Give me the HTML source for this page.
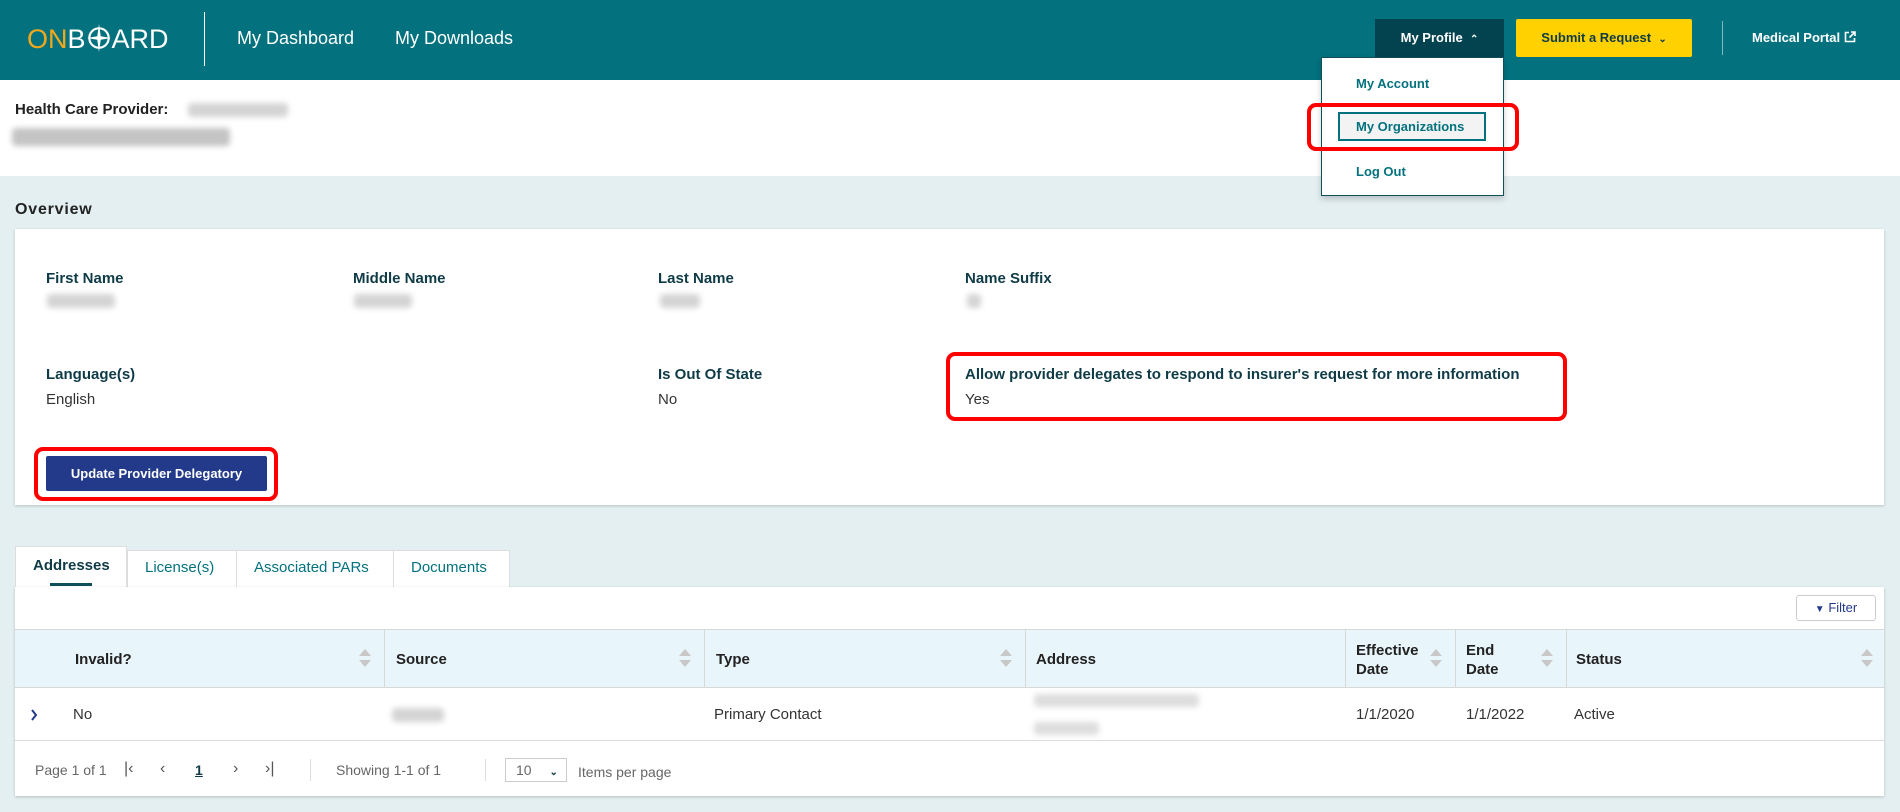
<!DOCTYPE html>
<html><head><meta charset="utf-8"><style>
*{box-sizing:border-box;margin:0;padding:0}
body{width:1900px;height:812px;overflow:hidden;background:#e4eff1;font-family:"Liberation Sans",sans-serif;color:#333;position:relative}
.a{position:absolute}
.hdr{left:0;top:0;width:1900px;height:80px;background:#03727e}
.blur{background:#d4d4d4;filter:blur(3px);border-radius:4px}
.lbl{font-weight:bold;font-size:15px;color:#0f3b47}
.val{font-size:15px;color:#333}
.red{border:4px solid #ff0000;border-radius:9px}
.th{font-weight:bold;font-size:15px;color:#222}
</style></head><body>
<div class="a hdr"></div>
<div class="a" style="left:27px;top:24px;font-size:27px;color:#fff;line-height:30px;white-space:nowrap"><span style="color:#f2a81d">ON</span>B<svg width="24" height="28" viewBox="0 0 22 26" style="vertical-align:-4px;margin:0 1px"><circle cx="11" cy="13" r="9" fill="none" stroke="#fff" stroke-width="2"/><path d="M11 0L12.6 11.4L22 13L12.6 14.6L11 26L9.4 14.6L0 13L9.4 11.4Z" fill="#fff"/></svg>ARD</div>
<div class="a" style="left:204px;top:12px;width:1px;height:54px;background:#fff"></div>
<div class="a" style="left:237px;top:28px;font-size:18px;color:#fff">My Dashboard</div>
<div class="a" style="left:395px;top:28px;font-size:18px;color:#fff">My Downloads</div>
<div class="a" style="left:1375px;top:19px;width:129px;height:38px;background:#03434f;color:#fff;font-weight:bold;font-size:13px;text-align:center;line-height:38px">My Profile &nbsp;<span style="font-size:10px">&#8963;</span></div>
<div class="a" style="left:1516px;top:19px;width:176px;height:38px;background:#ffd100;color:#0f3b47;font-weight:bold;font-size:13px;text-align:center;line-height:38px;border-radius:2px">Submit a Request &nbsp;<span style="font-size:10px">&#8964;</span></div>
<div class="a" style="left:1722px;top:21px;width:1px;height:34px;background:#7fb8be"></div>
<div class="a" style="left:1752px;top:30px;color:#fff;font-weight:bold;font-size:13px;white-space:nowrap">Medical Portal <svg width="12" height="12" viewBox="0 0 12 12" style="vertical-align:-1px"><path d="M5 1.5H1.5V10.5H10.5V7M7 1H11V5M11 1L5.5 6.5" stroke="#fff" stroke-width="1.6" fill="none"/></svg></div>
<div class="a" style="left:0;top:80px;width:1900px;height:96px;background:#fff"></div>
<div class="a" style="left:15px;top:101px;font-weight:bold;font-size:15px;color:#222">Health Care Provider:</div>
<div class="a blur" style="left:188px;top:103px;width:100px;height:14px"></div>
<div class="a blur" style="left:12px;top:128px;width:218px;height:18px;background:#c4c4c4"></div>
<div class="a" style="left:1321px;top:57px;width:183px;height:139px;background:#fff;border:1px solid #0f4f5a;box-shadow:0 3px 6px rgba(0,0,0,.2)"></div>
<div class="a" style="left:1356px;top:76px;font-weight:bold;font-size:13px;color:#03727e">My Account</div>
<div class="a" style="left:1338px;top:112px;width:148px;height:29px;background:#f3f3f3;border:2px solid #03727e"></div>
<div class="a" style="left:1356px;top:119px;font-weight:bold;font-size:13px;color:#03727e">My Organizations</div>
<div class="a" style="left:1356px;top:164px;font-weight:bold;font-size:13px;color:#03727e">Log Out</div>
<div class="a red" style="left:1307px;top:103px;width:212px;height:48px"></div>
<div class="a" style="left:15px;top:201px;font-weight:bold;font-size:16px;color:#222;letter-spacing:.8px">Overview</div>
<div class="a" style="left:15px;top:229px;width:1869px;height:276px;background:#fff;box-shadow:0 1px 3px rgba(0,0,0,.2)"></div>
<div class="a lbl" style="left:46px;top:270px">First Name</div>
<div class="a lbl" style="left:353px;top:270px">Middle Name</div>
<div class="a lbl" style="left:658px;top:270px">Last Name</div>
<div class="a lbl" style="left:965px;top:270px">Name Suffix</div>
<div class="a blur" style="left:47px;top:294px;width:68px;height:14px"></div>
<div class="a blur" style="left:354px;top:294px;width:58px;height:14px"></div>
<div class="a blur" style="left:660px;top:294px;width:40px;height:14px"></div>
<div class="a blur" style="left:967px;top:294px;width:14px;height:14px"></div>
<div class="a lbl" style="left:46px;top:366px">Language(s)</div>
<div class="a val" style="left:46px;top:391px">English</div>
<div class="a lbl" style="left:658px;top:366px">Is Out Of State</div>
<div class="a val" style="left:658px;top:391px">No</div>
<div class="a lbl" style="left:965px;top:366px">Allow provider delegates to respond to insurer's request for more information</div>
<div class="a val" style="left:965px;top:391px">Yes</div>
<div class="a red" style="left:946px;top:352px;width:621px;height:69px"></div>
<div class="a" style="left:46px;top:456px;width:221px;height:35px;background:#233a8b;border-radius:2px;color:#fff;font-weight:bold;font-size:13px;text-align:center;line-height:35px">Update Provider Delegatory</div>
<div class="a red" style="left:34px;top:447px;width:244px;height:54px"></div>
<div class="a" style="left:15px;top:546px;width:112px;height:42px;background:#fff;border:1px solid #ddd;border-bottom:none"></div>
<div class="a" style="left:33px;top:557px;font-weight:bold;font-size:15px;color:#0f3b47">Addresses</div>
<div class="a" style="left:50px;top:583px;width:42px;height:3px;background:#0f4f5a"></div>
<div class="a" style="left:127px;top:550px;width:383px;height:37px;background:#fff;border:1px solid #ddd;border-bottom:none"></div>
<div class="a" style="left:236px;top:550px;width:1px;height:37px;background:#ddd"></div>
<div class="a" style="left:393px;top:550px;width:1px;height:37px;background:#ddd"></div>
<div class="a" style="left:145px;top:559px;font-size:15px;color:#03727e">License(s)</div>
<div class="a" style="left:254px;top:559px;font-size:15px;color:#03727e">Associated PARs</div>
<div class="a" style="left:411px;top:559px;font-size:15px;color:#03727e">Documents</div>
<div class="a" style="left:15px;top:587px;width:1869px;height:209px;background:#fff;box-shadow:0 1px 3px rgba(0,0,0,.2)"></div>
<div class="a" style="left:1796px;top:595px;width:80px;height:26px;border:1px solid #ccc;border-radius:3px;font-size:13px;color:#233a8b;line-height:24px;text-align:center"><span style="font-size:10px">&#9660;</span> Filter</div>
<div class="a" style="left:15px;top:629px;width:1869px;height:59px;background:#e8f5fa;border-top:1px solid #d8d8d8;border-bottom:1px solid #d8d8d8"></div>
<div class="a" style="left:384px;top:629px;width:1px;height:59px;background:#d8d8d8"></div>
<div class="a" style="left:704px;top:629px;width:1px;height:59px;background:#d8d8d8"></div>
<div class="a" style="left:1025px;top:629px;width:1px;height:59px;background:#d8d8d8"></div>
<div class="a" style="left:1345px;top:629px;width:1px;height:59px;background:#d8d8d8"></div>
<div class="a" style="left:1455px;top:629px;width:1px;height:59px;background:#d8d8d8"></div>
<div class="a" style="left:1566px;top:629px;width:1px;height:59px;background:#d8d8d8"></div>
<div class="a th" style="left:75px;top:651px">Invalid?</div>
<div class="a th" style="left:396px;top:651px">Source</div>
<div class="a th" style="left:716px;top:651px">Type</div>
<div class="a th" style="left:1036px;top:651px">Address</div>
<div class="a th" style="left:1356px;top:641px;line-height:19px">Effective<br>Date</div>
<div class="a th" style="left:1466px;top:641px;line-height:19px">End<br>Date</div>
<div class="a th" style="left:1576px;top:651px">Status</div>
<svg class="a" style="left:0;top:0" width="1900" height="812"><g fill="#c8c8c8">
<path d="M359 656l6-7 6 7zM359 660l6 7 6-7z"/><path d="M679 656l6-7 6 7zM679 660l6 7 6-7z"/><path d="M1000 656l6-7 6 7zM1000 660l6 7 6-7z"/><path d="M1430 656l6-7 6 7zM1430 660l6 7 6-7z"/><path d="M1541 656l6-7 6 7zM1541 660l6 7 6-7z"/><path d="M1861 656l6-7 6 7zM1861 660l6 7 6-7z"/></g>
<path d="M32 710l4 5-4 5" stroke="#233a8b" stroke-width="2" fill="none"/></svg>
<div class="a val" style="left:73px;top:706px">No</div>
<div class="a blur" style="left:392px;top:708px;width:52px;height:14px"></div>
<div class="a val" style="left:714px;top:706px">Primary Contact</div>
<div class="a blur" style="left:1034px;top:694px;width:165px;height:13px;background:#ddd"></div>
<div class="a blur" style="left:1034px;top:722px;width:65px;height:13px;background:#ddd"></div>
<div class="a val" style="left:1356px;top:706px">1/1/2020</div>
<div class="a val" style="left:1466px;top:706px">1/1/2022</div>
<div class="a val" style="left:1574px;top:706px">Active</div>
<div class="a" style="left:15px;top:740px;width:1869px;height:1px;background:#ddd"></div>
<div class="a" style="left:35px;top:762px;font-size:14px;color:#666">Page 1 of 1</div>
<div class="a" style="left:124px;top:760px;font-size:16px;color:#555">|&#8249;</div>
<div class="a" style="left:160px;top:760px;font-size:16px;color:#555">&#8249;</div>
<div class="a" style="left:195px;top:762px;font-size:14px;font-weight:bold;color:#0f3b47;text-decoration:underline">1</div>
<div class="a" style="left:233px;top:760px;font-size:16px;color:#555">&#8250;</div>
<div class="a" style="left:265px;top:760px;font-size:16px;color:#555">&#8250;|</div>
<div class="a" style="left:310px;top:759px;width:1px;height:22px;background:#ddd"></div>
<div class="a" style="left:336px;top:762px;font-size:14px;color:#666">Showing 1-1 of 1</div>
<div class="a" style="left:485px;top:759px;width:1px;height:22px;background:#ddd"></div>
<div class="a" style="left:505px;top:758px;width:62px;height:24px;border:1px solid #ccc;font-size:14px;color:#666;padding:3px 0 0 10px">10 <span style="font-size:10px;color:#0f3b47;margin-left:14px;font-weight:bold">&#8964;</span></div>
<div class="a" style="left:578px;top:764px;font-size:14px;color:#666">Items per page</div>
</body></html>
